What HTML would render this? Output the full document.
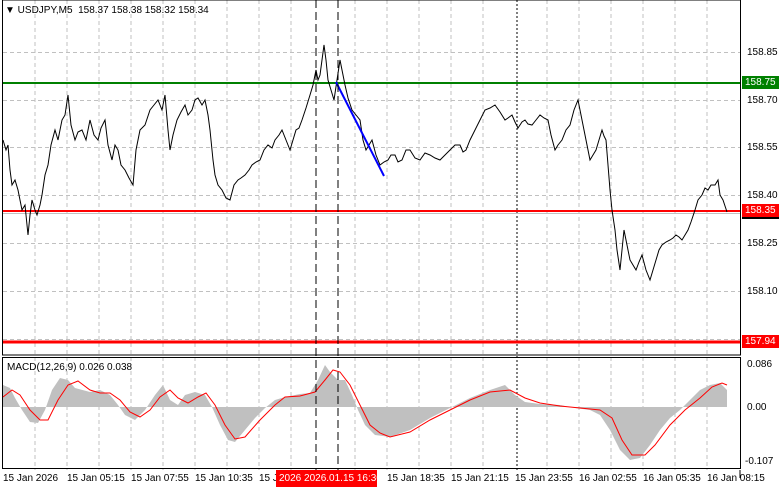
<!DOCTYPE html>
<html><head><style>
body{margin:0;width:781px;height:489px;background:#fff;overflow:hidden;font-family:"Liberation Sans",sans-serif;font-size:10px;color:#000;position:relative}
.t{position:absolute;white-space:nowrap;line-height:13px}
.lab{position:absolute;left:742px;width:34px;height:13px;line-height:13px;color:#fff;padding-left:3px}
</style></head><body>
<svg width="781" height="489" style="position:absolute;left:0;top:0">
<g stroke="#c0c0c0" stroke-dasharray="4,3" stroke-width="1">
<path d="M35 0V470M67 0V470M99 0V470M131 0V470M163 0V470M195 0V470M227 0V470M259 0V470M291 0V470M355 0V470M387 0V470M419 0V470M451 0V470M483 0V470M547 0V470M579 0V470M611 0V470M643 0V470M675 0V470M707 0V470"/>
<path d="M3 52.5H740M3 100.5H740M3 147.5H740M3 195.5H740M3 243.5H740M3 291.5H740M3 339.5H740"/>
</g>
<rect x="2.5" y="0" width="738" height="355" fill="none" stroke="#000"/>
<rect x="2.5" y="357.5" width="738" height="111" fill="none" stroke="#000"/>
<path d="M517 0V470" stroke="#000" stroke-dasharray="2,2"/>
<line x1="3" y1="83" x2="740" y2="83" stroke="#008000" stroke-width="2"/>
<line x1="3" y1="213.5" x2="740" y2="213.5" stroke="#c0c0c0"/>
<line x1="3" y1="211" x2="740" y2="211" stroke="#f00" stroke-width="2"/>
<line x1="3" y1="342" x2="740" y2="342" stroke="#f00" stroke-width="3"/>
<polyline fill="none" stroke="#000" stroke-width="1" points="3,140 6,150 8,145 10,170 12,185 15,180 18,190 20,200 22,210 25,205 28,235 30,215 32,200 35,210 37,215 40,205 42,195 45,175 48,165 51,145 55,130 58,140 62,120 65,115 68,95 71,125 75,140 78,132 82,130 86,140 90,120 94,135 98,140 101,128 105,120 108,145 112,160 115,145 118,150 121,165 125,170 129,178 133,185 136,150 140,130 145,125 150,110 154,105 158,100 162,110 165,95 168,130 170,150 173,135 177,120 181,112 185,105 188,115 192,110 195,100 198,98 202,105 205,100 208,115 210,130 213,160 215,175 218,185 222,190 226,198 230,200 234,185 238,180 241,178 245,175 249,170 252,165 256,162 260,160 264,150 268,145 272,148 275,140 279,135 282,130 286,140 290,150 293,140 296,130 299,128 302,120 306,108 310,95 313,85 316,70 318,80 320,75 322,60 324,45 326,60 328,80 331,90 334,100 337,80 340,60 342,70 345,85 348,98 352,110 356,115 360,120 363,140 366,150 369,145 372,140 376,155 380,165 384,162 388,160 391,155 395,155 398,162 402,160 406,150 410,150 415,158 420,160 425,153 430,155 435,158 440,160 445,155 450,150 455,145 460,145 463,152 466,150 470,140 475,130 480,120 485,110 490,108 495,105 500,112 505,120 508,118 512,115 515,122 518,128 522,122 525,120 528,124 532,125 536,120 540,115 544,118 548,120 551,135 555,150 558,145 562,140 566,130 570,125 574,110 578,100 581,115 584,130 587,145 590,160 593,155 596,150 599,140 602,130 604,136 606,140 608,165 610,190 612,210 615,230 617,250 620,270 622,250 624,230 627,245 630,260 633,265 636,270 639,262 642,255 646,270 650,280 653,270 656,260 659,250 662,245 666,242 670,240 673,238 676,235 679,237 682,240 685,235 688,230 691,222 695,210 698,200 702,195 705,188 708,190 711,185 715,185 718,180 720,195 723,200 727,212"/>
<line x1="336" y1="82" x2="384" y2="176" stroke="#00f" stroke-width="2"/>
<polygon fill="#c0c0c0" points="3,407 3,385 10,388 15,398 22,410 30,422 38,423 45,410 52,390 60,378 68,380 75,388 90,392 100,390 110,395 118,405 125,415 135,420 145,410 155,395 163,385 170,400 178,405 185,395 195,392 205,395 212,407 220,425 228,440 235,442 245,430 255,418 265,408 275,400 285,397 300,394 310,393 318,380 325,365 330,372 338,380 345,380 352,395 358,410 365,425 375,435 390,437 410,430 430,418 450,408 470,398 490,390 505,385 515,395 525,402 540,404 560,405 575,408 590,410 600,415 610,430 620,450 630,460 640,458 650,445 660,430 670,418 680,410 690,400 700,390 710,385 720,383 727,390 727,407"/>
<polyline fill="none" stroke="#f00" stroke-width="1" points="3,397 12,390 20,395 30,410 40,420 48,420 58,400 68,385 78,381 90,390 100,393 110,393 120,400 130,412 140,417 150,410 160,397 170,390 178,398 188,403 198,397 206,393 215,405 225,425 235,439 245,437 260,420 275,405 285,397 300,396 315,392 325,380 333,370 340,372 350,385 360,405 370,425 380,433 390,437 410,432 430,420 450,410 470,400 490,392 510,390 525,398 540,403 560,406 580,408 600,410 612,418 622,440 632,455 645,455 655,445 670,425 685,410 700,398 712,387 722,383 727,385"/>
<g stroke="#000" stroke-dasharray="8,4" stroke-width="1"><path d="M316 0V470M338 0V470"/></g>
<path d="M740 470V478" stroke="#000"/>
</svg>
<div class="t" style="left:5px;top:4px">▼ USDJPY,M5&nbsp; 158.37 158.38 158.32 158.34</div>
<div class="t" style="left:7px;top:361px">MACD(12,26,9) 0.026 0.038</div>
<div class="t" style="left:747px;top:46px">158.85</div>
<div class="lab" style="top:76px;background:#008000">158.75</div>
<div class="t" style="left:747px;top:94px">158.70</div>
<div class="t" style="left:747px;top:141px">158.55</div>
<div class="t" style="left:747px;top:189px">158.40</div>
<div class="lab" style="top:213px;background:#000;height:6px"></div>
<div class="lab" style="top:204px;background:#f00">158.35</div>
<div class="t" style="left:747px;top:237px">158.25</div>
<div class="t" style="left:747px;top:285px">158.10</div>
<div class="lab" style="top:335px;background:#f00">157.94</div>
<div class="t" style="left:747px;top:358px">0.086</div>
<div class="t" style="left:747px;top:401px">0.00</div>
<div class="t" style="left:745px;top:455px">-0.107</div>
<div class="t" style="left:3px;top:472px">15 Jan 2026</div>
<div class="t" style="left:67px;top:472px">15 Jan 05:15</div>
<div class="t" style="left:131px;top:472px">15 Jan 07:55</div>
<div class="t" style="left:195px;top:472px">15 Jan 10:35</div>
<div class="t" style="left:259px;top:472px">15 J</div>
<div class="t" style="left:276px;top:470px;background:#f00;color:#fff;padding:1px 3px;height:15px;line-height:15px;width:95px">2026 2026.01.15 16:30</div>
<div class="t" style="left:387px;top:472px">15 Jan 18:35</div>
<div class="t" style="left:451px;top:472px">15 Jan 21:15</div>
<div class="t" style="left:515px;top:472px">15 Jan 23:55</div>
<div class="t" style="left:579px;top:472px">16 Jan 02:55</div>
<div class="t" style="left:643px;top:472px">16 Jan 05:35</div>
<div class="t" style="left:707px;top:472px">16 Jan 08:15</div>
</body></html>
